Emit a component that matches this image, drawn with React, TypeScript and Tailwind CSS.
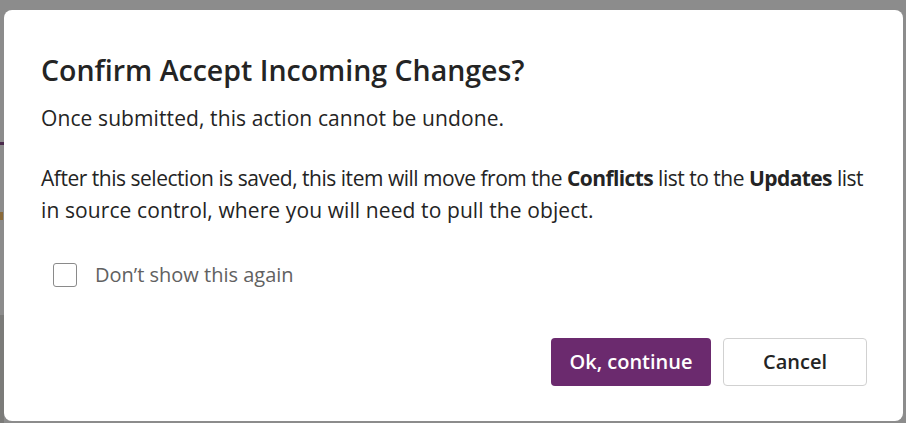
import React from "react";

export default function App() {
  return (
    <div
      className="relative h-[423px] w-[906px] overflow-hidden bg-[#8c8c8c] pl-[4px] pt-[10px]"
      style={{ fontFamily: '"Open Sans", "Noto Sans", sans-serif' }}
    >
      <div className="absolute left-0 top-[315px] h-[108px] w-[4px] bg-[#7b7b79]" />
      <div className="absolute left-0 top-[142px] h-[3px] w-[4px] bg-[#4a2a4c]" />
      <div className="absolute left-0 top-[212px] h-[8px] w-[3px] bg-[#8a6a3a]" />
      <div className="relative flex h-[411px] w-[899px] flex-col rounded-[8px] bg-white pl-[37px] pr-[36px] pt-[43px] pb-[35px]">
        <h1 className="whitespace-nowrap text-[28.5px] font-semibold leading-[34px] text-[#242424]">
          Confirm Accept Incoming Changes?
        </h1>
        <p className="mt-[15px] whitespace-nowrap text-[21px] leading-[32px] tracking-[0.1px] text-[#242424]">
          Once submitted, this action cannot be undone.
        </p>
        <p className="mt-[28px] whitespace-nowrap text-[21px] leading-[32px] text-[#242424]">
          <span className="tracking-[-0.48px]">
            After this selection is saved, this item will move from the{" "}
            <b className="font-bold tracking-[-0.6px]">Conflicts</b> list to the{" "}
            <b className="font-bold tracking-[-0.6px]">Updates</b> list
          </span>
          <br />
          <span className="tracking-[0.1px]">in source control, where you will need to pull the object.</span>
        </p>
        <label className="mt-[35px] flex h-[28px] items-center pl-[12px]">
          <span className="h-[24px] w-[24px] rounded-[3px] border border-[#8a8a8a] bg-white" />
          <span className="ml-[18px] text-[20px] leading-[28px] text-[#616161]">Don’t show this again</span>
        </label>
        <div className="mt-auto flex justify-end gap-[12px]">
          <button className="h-[48px] w-[160px] rounded-[4px] bg-[#6b2a6e] text-[20px] font-semibold text-white">
            Ok, continue
          </button>
          <button className="h-[48px] w-[144px] rounded-[4px] border border-[#d1d1d1] bg-white text-[20px] font-semibold text-[#242424]">
            Cancel
          </button>
        </div>
      </div>
    </div>
  );
}
